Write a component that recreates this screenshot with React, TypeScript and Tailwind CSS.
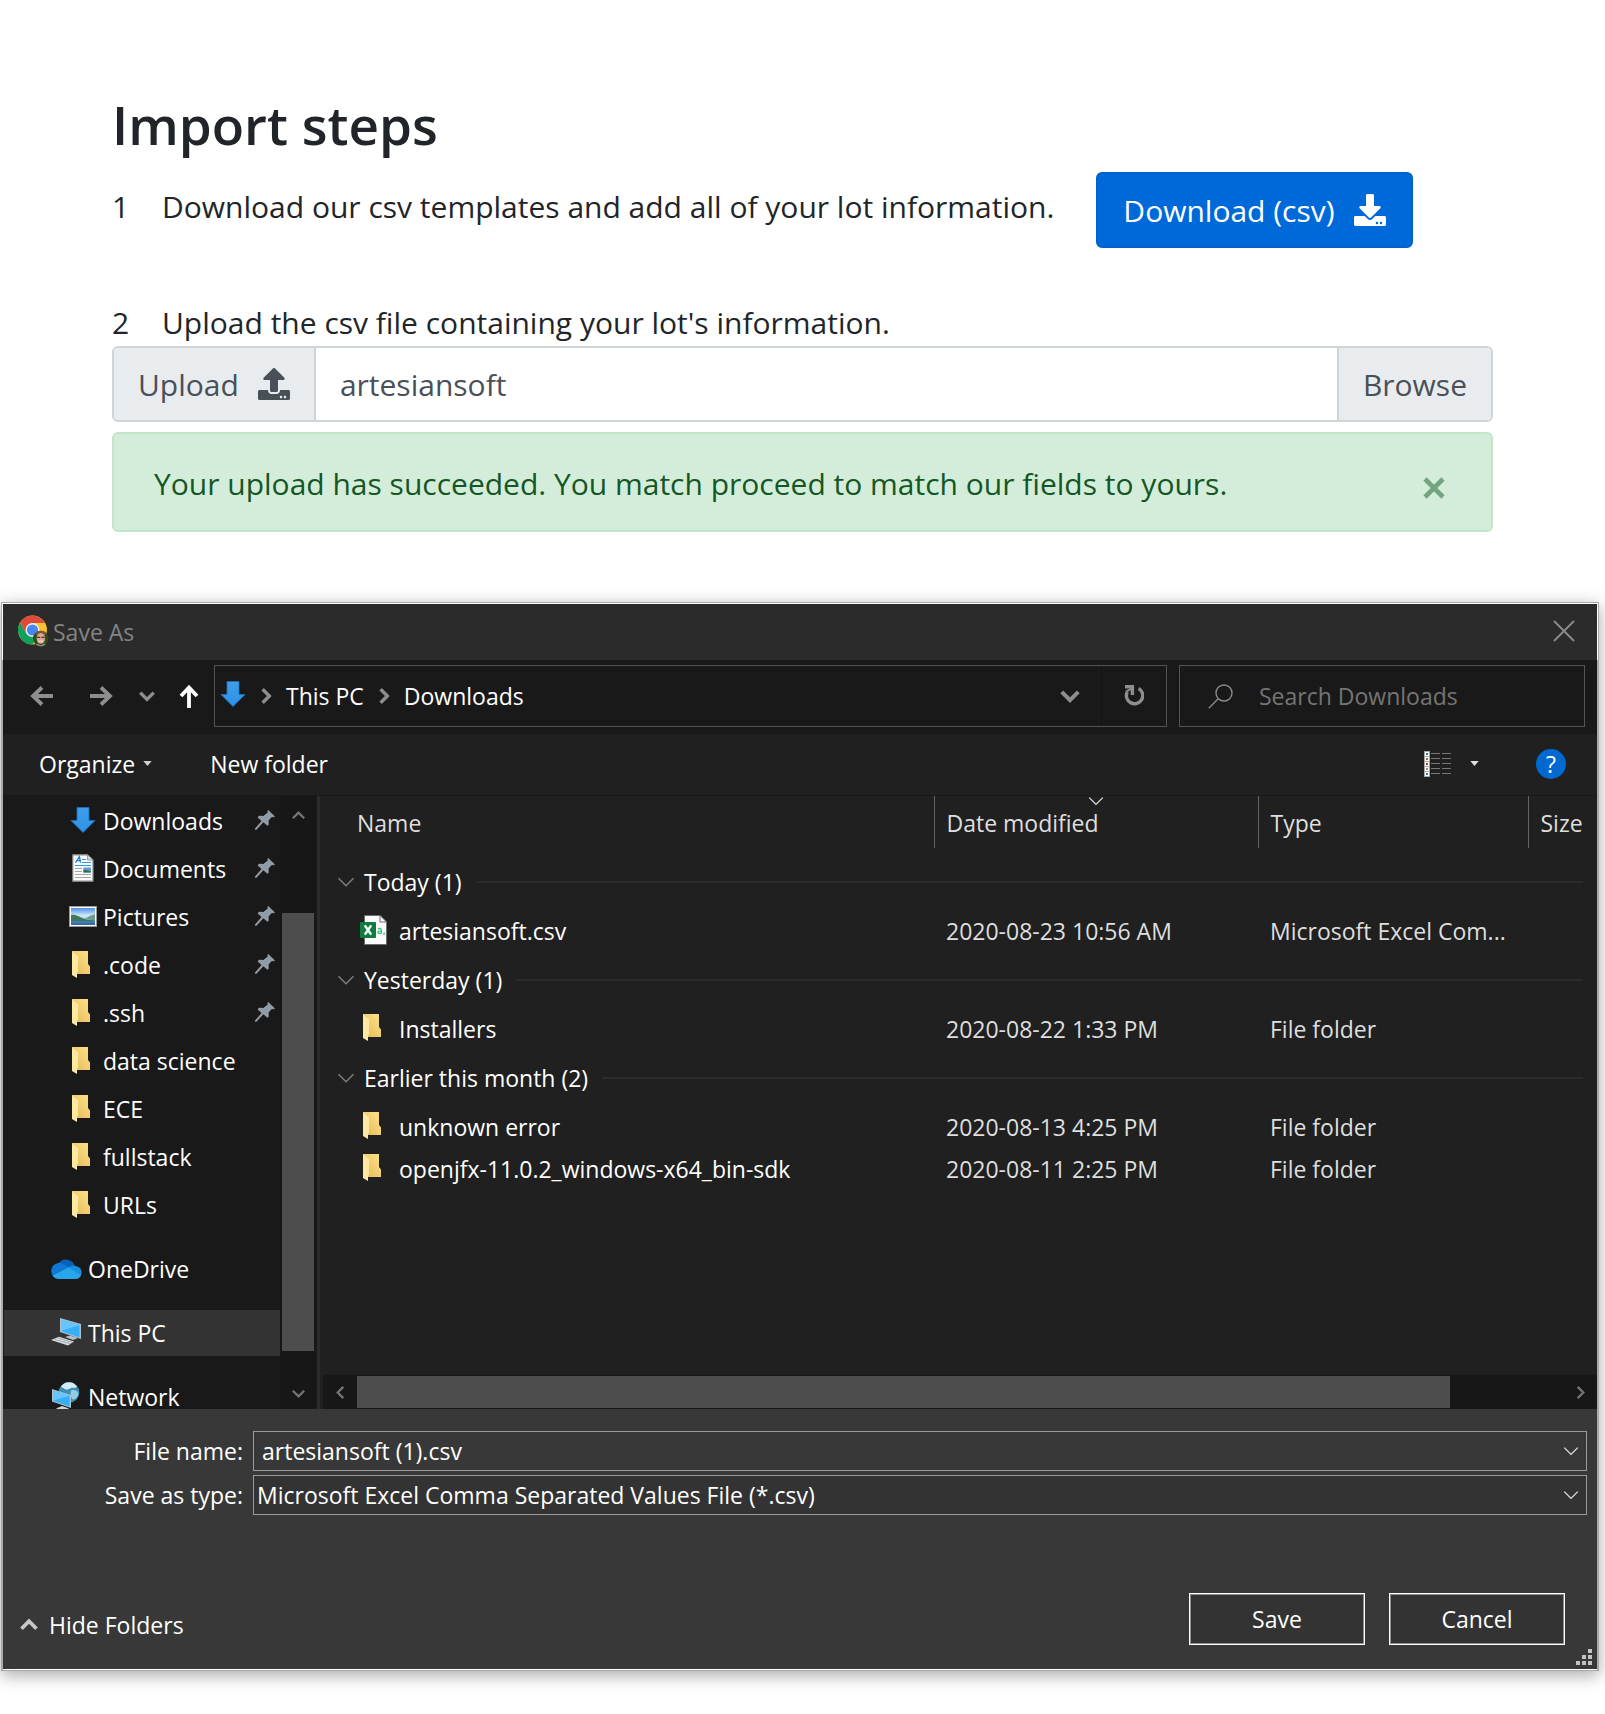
import type { ReactNode } from "react";
import { FaDownload, FaUpload } from "react-icons/fa";

type IconProps = { className?: string };

function Chevron({
  dir,
  size = 16,
  stroke = 2,
  className = "",
}: IconProps & { dir: "up" | "down" | "left" | "right"; size?: number; stroke?: number }) {
  const d = {
    up: "M2 11 L8 5 L14 11",
    down: "M2 5 L8 11 L14 5",
    left: "M11 2 L5 8 L11 14",
    right: "M5 2 L11 8 L5 14",
  }[dir];
  return (
    <svg viewBox="0 0 16 16" width={size} height={size} fill="none" stroke="currentColor" strokeWidth={stroke} className={className} aria-hidden="true">
      <path d={d} />
    </svg>
  );
}

function Caret({ className = "" }: IconProps) {
  return (
    <svg viewBox="0 0 10 6" width="9" height="5" fill="currentColor" className={className} aria-hidden="true">
      <path d="M0 0H10L5 6Z" />
    </svg>
  );
}

function Arrow({ dir, className = "" }: IconProps & { dir: "left" | "right" | "up" }) {
  const d = {
    left: "M23 12H3 M12 3.5L3 12L12 20.5",
    right: "M1 12H21 M12 3.5L21 12L12 20.5",
    up: "M12 24V4 M4 12L12 3.5L20 12",
  }[dir];
  return (
    <svg viewBox="0 0 24 24" width="24" height="24" fill="none" stroke="currentColor" strokeWidth="3.8" className={className} aria-hidden="true">
      <path d={d} />
    </svg>
  );
}

function ChromeLogo() {
  return (
    <svg viewBox="0 0 31 32" width="31" height="32" aria-hidden="true">
      <circle cx="14.5" cy="15" r="14.5" fill="#fbc02d" />
      <path d="M2 7.7A14.5 14.5 0 0 0 14.5 29.5L20.8 18.6L8.3 18.6Z" fill="#12a15d" />
      <path d="M2 7.7A14.5 14.5 0 0 1 27.1 8H14.5L8.3 18.6Z" fill="#dd4b3e" />
      <circle cx="14.5" cy="15" r="7" fill="#f1f1f1" />
      <circle cx="14.5" cy="15" r="5.6" fill="#4688f1" />
      <clipPath id="avatar">
        <circle cx="22.8" cy="23.6" r="7.8" />
      </clipPath>
      <g clipPath="url(#avatar)">
        <rect x="14" y="15" width="18" height="18" fill="#2e4a1f" />
        <ellipse cx="22.8" cy="18.5" rx="5" ry="3.4" fill="#7a5638" />
        <ellipse cx="22.8" cy="23.4" rx="4.2" ry="5.4" fill="#d9a88e" />
        <path d="M19 22.4h3.2M23.4 22.4h3.2" stroke="#4c3327" strokeWidth="1.3" />
        <path d="M20.6 26.2h4.4" stroke="#f7ece6" strokeWidth="1" />
        <path d="M15 32l4.4-3.4 3.4 1.6 3.4-1.6L31 32z" fill="#8d8478" />
      </g>
    </svg>
  );
}

function DownArrow() {
  return (
    <svg viewBox="0 0 26 26" width="26" height="26" aria-hidden="true">
      <defs>
        <linearGradient id="dl" x1="0" y1="0" x2="0" y2="1">
          <stop offset="0" stopColor="#3f9ee8" />
          <stop offset="1" stopColor="#2b93ea" />
        </linearGradient>
      </defs>
      <path d="M7 .5H19V13.5H25L13 25.5L1 13.5H7Z" fill="url(#dl)" stroke="#1c6fba" strokeWidth="0.8" />
    </svg>
  );
}

function DocumentIcon() {
  return (
    <svg viewBox="0 0 22 28" width="22" height="28" aria-hidden="true">
      <path d="M.8.8H15.5L21 6V27.2H.8Z" fill="#fafafa" stroke="#8b8b8b" strokeWidth="1.2" />
      <path d="M15.5.8V6H21Z" fill="#d9d9d9" stroke="#8b8b8b" strokeWidth="0.8" />
      <path d="M3.5 8.6L7.4 2.8L8.6 8.6M5 6.6H8.2" stroke="#1b87d6" strokeWidth="1.4" fill="none" />
      <path d="M10 5.5h4M10 8.5h9M3 11.5h16" stroke="#2d9ae2" strokeWidth="1.1" />
      <path d="M3 14.5h7M3 17.5h7M3 20.5h16M3 23.5h16" stroke="#a5a5a5" strokeWidth="1" />
      <rect x="11.5" y="13.5" width="7.5" height="5" fill="#5a9bd8" />
      <path d="M11.5 15.5l7.5 2v1h-7.5z" fill="#35684b" />
    </svg>
  );
}

function PictureIcon() {
  return (
    <svg viewBox="0 0 28 21" width="28" height="21" aria-hidden="true">
      <defs>
        <linearGradient id="sky" x1="0" y1="0" x2="0" y2="1">
          <stop offset="0" stopColor="#4f8fe8" />
          <stop offset="0.45" stopColor="#d2e9f8" />
          <stop offset="0.75" stopColor="#8fc0de" />
          <stop offset="1" stopColor="#2c66a4" />
        </linearGradient>
      </defs>
      <rect x=".5" y=".5" width="27" height="20" fill="#fff" stroke="#9a9a9a" />
      <rect x="2" y="2" width="24" height="17" fill="url(#sky)" />
      <path d="M2 9C6 8 9 10 12 11.5S20 14 26 14.5V15H2Z" fill="#3f7a5c" />
      <path d="M16 13C19 11 22 9 26 8.6V14.5Z" fill="#6b9c8b" />
      <path d="M2 14.6H26V19H2Z" fill="#2f6a9e" opacity=".7" />
    </svg>
  );
}

function FolderIcon() {
  return (
    <svg viewBox="0 0 22 27" width="22" height="27" aria-hidden="true">
      <defs>
        <linearGradient id="folder" x1="0" y1="1" x2="1" y2="0">
          <stop offset="0.2" stopColor="#e9c260" />
          <stop offset="0.8" stopColor="#fadb81" />
        </linearGradient>
      </defs>
      <path d="M0 0H16V13L18 15.5V23H5L0 20Z" fill="url(#folder)" />
      <path d="M0 .5L6 5V21L5 21.5V27L0 24Z" fill="#ffe8a2" />
    </svg>
  );
}

function OneDriveIcon() {
  return (
    <svg viewBox="0 0 32 21" width="32" height="21" aria-hidden="true">
      <path d="M8 7A9 9 0 0 1 25 8.5L17 13L8 7Z" fill="#0a62b8" />
      <path d="M7.5 5.2C11 4.6 13.5 6 20 10.5L8 20.6A7.8 7.8 0 0 1 7.5 5.2Z" fill="#0f78d4" />
      <path d="M18 9.4C21 7.6 24.6 7.2 27.4 8.4A6.4 6.4 0 0 1 30 18.6Z" fill="#1490df" />
      <path d="M2.4 17.8L18.5 9.6L31 17.2A6 6 0 0 1 25.6 21H8A7.8 7.8 0 0 1 2.4 17.8Z" fill="#28a8ea" />
    </svg>
  );
}

function PcIcon() {
  return (
    <svg viewBox="0 0 31 28" width="31" height="28" aria-hidden="true">
      <path d="M9 0L30 6V21L9 14Z" fill="#a9c3d2" />
      <path d="M10 1.5L28.5 7V19.5L10 13Z" fill="#36aef8" />
      <path d="M10 1.5L28.5 7L10 13Z" fill="#67c6ff" />
      <path d="M14 19L19 17.6L27 20L22 22Z" fill="#b7c0c6" />
      <path d="M0 22L8 18.8L23 23.4L17 27.6Z" fill="#d7dce0" />
      <path d="M3.5 21.4L19 25.6M7 20L21 24.2" stroke="#8b949b" strokeWidth=".7" />
    </svg>
  );
}

function NetworkIcon() {
  return (
    <svg viewBox="0 0 28 28" width="28" height="28" aria-hidden="true">
      <circle cx="17" cy="10.5" r="10.4" fill="#3d8fb5" />
      <path d="M9 4.5C11 1.6 14 .2 17 .2C20 .2 23 1.6 25 4.5C23 7 21 5 18 6.5S14 8 12 6.5 10 6 9 4.5Z" fill="#d5ecf4" />
      <path d="M19 8.5C22 7.5 25 8 26 11S24 17 21.5 17.5 18 11 19 8.5Z" fill="#93cbe0" />
      <path d="M0 7L19 13V26L0 19.5Z" fill="#a9c3d2" />
      <path d="M1 8.4L17.6 13.7V24.4L1 18.7Z" fill="#36aef8" />
      <path d="M1 8.4L17.6 13.7L1 18.7Z" fill="#67c6ff" />
      <path d="M4 26.5L10 24L17 26.4L14 28H8Z" fill="#cfd6da" />
    </svg>
  );
}

function PinIcon() {
  return (
    <svg viewBox="0 0 20 20" width="20" height="20" fill="#929ca4" aria-hidden="true">
      <path d="M13.2 0L20 6.4L18.4 7.2L16.8 7L13.6 10.6L13.8 14.4L12.4 15.8L8.4 12.2L1.2 20L0 19.6V18.6L6.6 11L2.6 7.4L4 5.8L8.4 6L12.8 2.6L12.4 1Z" />
    </svg>
  );
}

function CsvIcon() {
  return (
    <svg viewBox="0 0 27 30" width="27" height="30" aria-hidden="true">
      <path d="M4.5.5H20L26.5 7V29.5H4.5Z" fill="#fafafa" stroke="#6d6d6d" />
      <path d="M20 .5V7H26.5Z" fill="#fff" stroke="#6d6d6d" />
      <rect x="0" y="7" width="16" height="16" rx="1" fill="#107c41" />
      <path d="M4.8 10.4L11.2 19.6M11.2 10.4L4.8 19.6" stroke="#fff" strokeWidth="2.4" />
      <path d="M18 14.2C19 13.2 21.4 13.2 21.4 15V18.6M21.4 16.2C19 16 17.8 16.6 17.9 17.6C18 18.8 20.6 18.7 21.4 17.4M24.4 17.4L23.8 20" stroke="#3fc380" strokeWidth="1.4" fill="none" />
    </svg>
  );
}

function ViewsIcon() {
  const rows = [
    { y: 0, c: "#3a6fb0" },
    { y: 5, c: "#7a7a3a" },
    { y: 10, c: "#c8321e" },
    { y: 15, c: "#9a9a6a" },
    { y: 20, c: "#3a7fb0" },
  ];
  return (
    <svg viewBox="0 0 28 26" width="28" height="26" aria-hidden="true">
      {rows.map((r) => (
        <g key={r.y}>
          <rect x=".5" y={r.y + 0.5} width="5" height="5" fill="#fff" stroke="#a8a8a8" />
          <rect x="2" y={r.y + 2} width="2" height="2" fill={r.c} />
          <path d={`M7 ${r.y + 2.5}h9M18 ${r.y + 2.5}h9`} stroke="#777" />
        </g>
      ))}
    </svg>
  );
}

function RefreshIcon() {
  return (
    <svg viewBox="0 0 20 22" width="20" height="22" fill="none" aria-hidden="true">
      <path d="M14.6 3.4A8.2 8.2 0 1 1 3.2 7" stroke="#8e8e8e" strokeWidth="3.4" />
      <path d="M1 1.7H8.4V10" stroke="#8e8e8e" strokeWidth="3.4" />
      <path d="M2 6.6L8 3.4" stroke="#8e8e8e" strokeWidth="2" />
    </svg>
  );
}

function SearchIcon() {
  return (
    <svg viewBox="0 0 25 25" width="25" height="25" fill="none" stroke="#8a8a8a" strokeWidth="1.4" aria-hidden="true">
      <circle cx="16" cy="9" r="8" />
      <path d="M10.2 14.8L.8 24.2" />
    </svg>
  );
}

const quickAccess: { label: string; icon: ReactNode; pinned?: boolean }[] = [
  { label: "Downloads", icon: <DownArrow />, pinned: true },
  { label: "Documents", icon: <DocumentIcon />, pinned: true },
  { label: "Pictures", icon: <PictureIcon />, pinned: true },
  { label: ".code", icon: <FolderIcon />, pinned: true },
  { label: ".ssh", icon: <FolderIcon />, pinned: true },
  { label: "data science", icon: <FolderIcon /> },
  { label: "ECE", icon: <FolderIcon /> },
  { label: "fullstack", icon: <FolderIcon /> },
  { label: "URLs", icon: <FolderIcon /> },
];

const roots: { label: string; icon: ReactNode; selected?: boolean }[] = [
  { label: "OneDrive", icon: <OneDriveIcon /> },
  { label: "This PC", icon: <PcIcon />, selected: true },
  { label: "Network", icon: <NetworkIcon /> },
];

const groups = [
  {
    title: "Today (1)",
    rows: [{ name: "artesiansoft.csv", icon: <CsvIcon />, date: "2020-08-23 10:56 AM", type: "Microsoft Excel Com..." }],
  },
  {
    title: "Yesterday (1)",
    rows: [{ name: "Installers", icon: <FolderIcon />, date: "2020-08-22 1:33 PM", type: "File folder" }],
  },
  {
    title: "Earlier this month (2)",
    rows: [
      { name: "unknown error", icon: <FolderIcon />, date: "2020-08-13 4:25 PM", type: "File folder" },
      { name: "openjfx-11.0.2_windows-x64_bin-sdk", icon: <FolderIcon />, date: "2020-08-11 2:25 PM", type: "File folder" },
    ],
  },
];

function ImportSteps() {
  return (
    <main className="px-28 pt-[91px] text-[30px] text-[#212529]">
      <h1 className="text-[53px] leading-[68px] font-semibold">Import steps</h1>
      <div className="mt-[13px] flex items-start">
        <span className="mt-[11px] w-[50px] shrink-0 leading-[48px]">1</span>
        <p className="mt-[11px] mr-[42px] leading-[48px]">Download our csv templates and add all of your lot information.</p>
        <button type="button" className="flex h-[76px] shrink-0 items-center gap-[19px] rounded-md border-2 border-[#0062cc] bg-[#0069d9] px-[25px] text-white">
          Download (csv)
          <FaDownload size={32} aria-hidden="true" />
        </button>
      </div>
      <div className="mt-[52px] flex leading-[46px]">
        <span className="w-[50px] shrink-0">2</span>
        <label htmlFor="upload-name">Upload the csv file containing your lot's information.</label>
      </div>
      <div className="flex h-[76px] overflow-hidden rounded-md border-2 border-[#ced4da] text-[#495057]">
        <button type="button" className="flex items-center gap-[19px] border-r-2 border-[#ced4da] bg-[#e9ecef] px-6">
          Upload
          <FaUpload size={32} aria-hidden="true" />
        </button>
        <input id="upload-name" type="text" defaultValue="artesiansoft" className="min-w-0 flex-1 bg-white px-6 outline-none" />
        <button type="button" className="border-l-2 border-[#ced4da] bg-[#e9ecef] px-6">
          Browse
        </button>
      </div>
      <div role="alert" className="mt-2.5 flex h-[100px] items-center justify-between rounded-md border-2 border-[#c3e6cb] bg-[#d4edda] pt-0.5 pr-[46px] pl-10 text-[#155724]">
        <p>Your upload has succeeded. You match proceed to match our fields to yours.</p>
        <button type="button" aria-label="Dismiss" className="pt-2.5 text-[#74a47f]">
          <svg viewBox="0 0 22 22" width="22" height="22" stroke="currentColor" strokeWidth="4.6" className="block" aria-hidden="true">
            <path d="M2 2L20 20M20 2L2 20" />
          </svg>
        </button>
      </div>
    </main>
  );
}

function TitleBar() {
  return (
    <header className="flex h-[57px] items-center border-x border-t border-white bg-[#2b2b2b] pr-[22px] pb-0.5 pl-[15px]">
      <ChromeLogo />
      <h2 className="ml-1 pt-0.5 text-[#848484]">Save As</h2>
      <button type="button" aria-label="Close" className="ml-auto text-[#8c8c8c]">
        <svg viewBox="0 0 22 22" width="22" height="22" stroke="currentColor" strokeWidth="1.8" aria-hidden="true">
          <path d="M1 1L21 21M21 1L1 21" />
        </svg>
      </button>
    </header>
  );
}

function NavBar() {
  return (
    <div className="flex h-[74px] items-center bg-[#191919] pr-3 pb-0.5 pl-[9px]">
      <button type="button" aria-label="Back" className="flex w-[59px] justify-center text-[#8e8e8e]">
        <Arrow dir="left" />
      </button>
      <button type="button" aria-label="Forward" className="flex w-[59px] justify-center text-[#8e8e8e]">
        <Arrow dir="right" />
      </button>
      <button type="button" aria-label="Recent locations" className="flex w-[34px] justify-center text-[#8e8e8e]">
        <Chevron dir="down" size={18} stroke={3} />
      </button>
      <button type="button" aria-label="Up" className="flex w-[50px] justify-center text-white">
        <Arrow dir="up" />
      </button>
      <nav aria-label="Address" className="flex h-[62px] flex-1 items-center border border-[#535353] pl-[5px] text-white">
        <span className="pb-1">
          <DownArrow />
        </span>
        <Chevron dir="right" size={18} stroke={3} className="mx-[11px] text-[#8e8e8e]" />
        <a href="#this-pc">This PC</a>
        <Chevron dir="right" size={18} stroke={3} className="mx-[11px] text-[#8e8e8e]" />
        <a href="#downloads">Downloads</a>
        <button type="button" aria-label="Previous locations" className="ml-auto flex h-full items-center border-r border-[#141414] pr-5 text-[#8e8e8e]">
          <Chevron dir="down" size={22} stroke={3} />
        </button>
        <button type="button" aria-label="Refresh" className="flex h-full w-16 items-center justify-center">
          <RefreshIcon />
        </button>
      </nav>
      <label className="ml-3 flex h-[62px] w-[406px] items-center border border-[#535353] pl-7">
        <SearchIcon />
        <input type="search" aria-label="Search Downloads" placeholder="Search Downloads" className="ml-[26px] min-w-0 flex-1 bg-transparent text-white outline-none placeholder:text-[#757575]" />
      </label>
    </div>
  );
}

function ToolBar() {
  return (
    <div className="flex h-[62px] items-center border-b border-[#191919] bg-[#202020] pr-[31px] pb-0.5 pl-9 text-white">
      <button type="button" className="flex items-center gap-2">
        Organize
        <Caret className="text-[#d0d0d0]" />
      </button>
      <button type="button" className="ml-[58px]">
        New folder
      </button>
      <button type="button" aria-label="Change your view" className="ml-auto flex items-center gap-[18px] text-[#e0e0e0]">
        <ViewsIcon />
        <Caret />
      </button>
      <button type="button" aria-label="Help" className="ml-[57px] flex size-[30px] items-center justify-center rounded-full bg-[#0069cf]">
        ?
      </button>
    </div>
  );
}

function Sidebar() {
  return (
    <aside className="flex h-full w-[317px] shrink-0 border-r-[3px] border-[#2b2b2b] bg-[#191919] text-white">
      <div className="h-full w-[277px] overflow-hidden pt-px">
        <ul>
          {quickAccess.map((item) => (
            <li key={item.label}>
              <a href="#folder" className="flex h-12 items-center pr-[5px] pl-[66px]">
                <span className="mr-1.5 flex w-7 justify-center pb-0.5">{item.icon}</span>
                {item.label}
                {item.pinned && (
                  <span className="ml-auto pb-0.5">
                    <PinIcon />
                  </span>
                )}
              </a>
            </li>
          ))}
        </ul>
        <ul className="leading-5">
          {roots.map((item) => (
            <li key={item.label} className="pt-4">
              <a
                href="#root"
                className={item.selected ? "ml-px flex h-12 items-center border-y border-[#191919] bg-[#333333] pl-[46px]" : "flex h-12 items-center pl-[47px]"}
              >
                <span className="mr-1.5 flex w-8 justify-center pb-0.5">{item.icon}</span>
                {item.label}
              </a>
            </li>
          ))}
        </ul>
      </div>
      <div className="flex w-9 flex-col items-center bg-[#171717] text-[#757575]">
        <div className="flex h-[117px] items-start pt-3">
          <Chevron dir="up" size={15} stroke={2.4} />
        </div>
        <div className="h-[438px] w-8 bg-[#4d4d4d]" />
        <div className="flex flex-1 items-end pb-2">
          <Chevron dir="down" size={15} stroke={2.4} />
        </div>
      </div>
    </aside>
  );
}

function FileList() {
  return (
    <section aria-label="Files" className="flex h-full min-w-0 flex-1 flex-col justify-between bg-[#202020] pl-[3px]">
      <table className="w-full table-fixed border-collapse text-left text-[#dedede]">
        <colgroup>
          <col />
          <col className="w-[324px]" />
          <col className="w-[270px]" />
          <col className="w-[69px]" />
        </colgroup>
        <thead>
          <tr className="h-[52px] align-middle">
            <th className="border-r border-[#636363] pt-0.5 pl-[34px] font-normal">Name</th>
            <th className="relative border-r border-[#636363] pt-0.5 pl-3 font-normal">
              Date modified
              <Chevron dir="down" size={18} stroke={1.2} className="absolute inset-x-0 -top-1 mx-auto" />
            </th>
            <th className="border-r border-[#636363] pt-0.5 pl-3 font-normal">Type</th>
            <th className="pt-0.5 pl-3 font-normal">Size</th>
          </tr>
          <tr className="h-1.5" />
        </thead>
        {groups.map((g) => (
          <tbody key={g.title}>
            <tr className="h-14">
              <th colSpan={4} scope="rowgroup" className="pr-3.5 pl-[13px] font-normal text-white">
                <span className="flex items-center">
                  <Chevron dir="down" size={20} stroke={1.2} className="mr-2 text-[#7d7d7d]" />
                  {g.title}
                  <span className="ml-3.5 h-0.5 flex-1 bg-[#2b2b2b]" />
                </span>
              </th>
            </tr>
            {g.rows.map((r) => (
              <tr key={r.name} className="h-[42px]">
                <td className="pl-[37px] text-white">
                  <span className="flex items-center">
                    <span className="mr-3 flex h-[34px] w-[27px] items-center justify-center pb-[3px]">{r.icon}</span>
                    {r.name}
                  </span>
                </td>
                <td className="pl-3 whitespace-nowrap">{r.date}</td>
                <td className="pl-3 whitespace-nowrap">{r.type}</td>
                <td />
              </tr>
            ))}
          </tbody>
        ))}
      </table>
      <div className="flex h-[34px] items-center bg-[#171717] text-[#757575]">
        <span className="flex w-[34px] justify-center">
          <Chevron dir="left" size={15} stroke={2.4} />
        </span>
        <div className="flex h-8 flex-1">
          <div className="h-full flex-[29] bg-[#4d4d4d]" />
          <div className="h-full flex-[3]" />
        </div>
        <span className="flex w-[34px] justify-center">
          <Chevron dir="right" size={15} stroke={2.4} />
        </span>
      </div>
    </section>
  );
}

function ResizeGrip() {
  return (
    <svg viewBox="0 0 16 16" width="16" height="16" fill="#c4c4c4" className="absolute right-[5px] bottom-1" aria-hidden="true">
      <path d="M12 0h4v4h-4zM6 6h4v4H6zM12 6h4v4h-4zM0 12h4v4H0zM6 12h4v4H6zM12 12h4v4h-4z" />
    </svg>
  );
}

function DialogFooter() {
  return (
    <footer className="relative border-b border-white bg-[#383838] pt-[22px] pr-2.5 pb-6 text-white">
      <div className="grid grid-cols-[240px_1fr] items-center gap-x-2.5 gap-y-1">
        <label htmlFor="file-name" className="text-right">
          File name:
        </label>
        <div className="relative">
          <input id="file-name" type="text" defaultValue="artesiansoft (1).csv" className="block h-10 w-full border border-[#9b9b9b] bg-[#383838] px-2 outline-none" />
          <Chevron dir="down" size={18} stroke={1.2} className="absolute top-[11px] right-[7px] text-[#dedede]" />
        </div>
        <label htmlFor="file-type" className="text-right">
          Save as type:
        </label>
        <div className="relative">
          <select id="file-type" className="block h-10 w-full appearance-none border border-[#9b9b9b] bg-[#333333] px-[3px] outline-none">
            <option>Microsoft Excel Comma Separated Values File (*.csv)</option>
          </select>
          <Chevron dir="down" size={18} stroke={1.2} className="pointer-events-none absolute top-[11px] right-[7px] text-[#dedede]" />
        </div>
      </div>
      <div className="mt-[78px] flex items-center gap-6 pr-[22px] pl-4">
        <button type="button" className="mr-auto flex items-center gap-2.5 pt-3">
          <Chevron dir="up" size={20} stroke={3} className="text-[#c8c8c8]" />
          Hide Folders
        </button>
        <button type="button" className="h-[52px] w-44 border border-white bg-[#333333] ring-1 ring-[#8e8e8e] ring-inset">
          Save
        </button>
        <button type="button" className="h-[52px] w-44 border border-white bg-[#333333] ring-1 ring-[#8e8e8e] ring-inset">
          Cancel
        </button>
      </div>
      <ResizeGrip />
    </footer>
  );
}

export default function App() {
  return (
    <div className="min-h-screen bg-white font-['Open_Sans','Noto_Sans',sans-serif] leading-normal">
      <ImportSteps />
      <section role="dialog" aria-label="Save As" className="mt-[70px] mr-1.5 ml-px border border-[#a9a9a9] text-[23px] leading-7 shadow-[0_4px_16px_rgba(0,0,0,0.35)]">
        <TitleBar />
        <div className="border-x border-[#a9a9a9]">
          <NavBar />
          <ToolBar />
          <div className="flex h-[613px]">
            <Sidebar />
            <FileList />
          </div>
          <DialogFooter />
        </div>
      </section>
    </div>
  );
}
